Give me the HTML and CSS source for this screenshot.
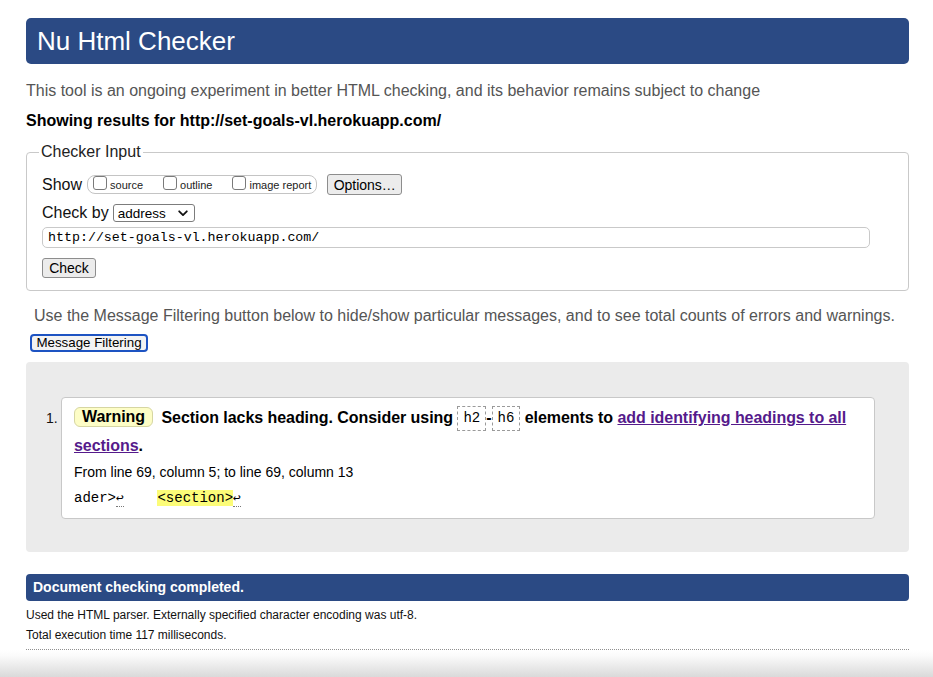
FILE: index.html
```html
<!DOCTYPE html>
<html lang="en">
<head>
<meta charset="utf-8">
<title>Nu Html Checker</title>
<link rel="stylesheet" href="styles.css">
</head>
<body>
<div class="page">
  <h1 class="title">Nu Html Checker</h1>
  <p class="intro">This tool is an ongoing experiment in better HTML checking, and its behavior remains subject to change</p>
  <p class="showing">Showing results for http://set-goals-vl.herokuapp.com/</p>
  <fieldset class="checker">
    <legend>Checker Input</legend>
    <div class="row show-row">
      <span class="lbl">Show</span>
      <span class="opts">
        <label class="opt"><input type="checkbox" class="cb">source</label>
        <label class="opt"><input type="checkbox" class="cb">outline</label>
        <label class="opt"><input type="checkbox" class="cb">image report</label>
      </span>
      <button class="btn options" type="button">Options…</button>
    </div>
    <div class="row by-row">
      <span class="lbl">Check by</span>
      <span class="select"><span class="sel-text">address</span><svg class="chev" width="10" height="7" viewBox="0 0 10 7"><path d="M1.2 1.3 5 5.1 8.8 1.3" fill="none" stroke="#111" stroke-width="1.8" stroke-linecap="round" stroke-linejoin="round"/></svg></span>
    </div>
    <input class="url" type="text" value="http://set-goals-vl.herokuapp.com/">
    <button class="btn check" type="button">Check</button>
  </fieldset>
  <p class="filter-note">Use the Message Filtering button below to hide/show particular messages, and to see total counts of errors and warnings.</p>
  <button class="btn filter" type="button">Message Filtering</button>
  <div class="results">
    <ol class="msgs">
      <li class="msg">
        <div class="num">1.</div>
        <div class="card">
          <p class="text"><span class="badge">Warning</span> Section lacks heading. Consider using <code class="el">h2</code>-<code class="el">h6</code> elements to <a class="link" href="#">add identifying headings to all sections</a>.</p>
          <p class="loc">From line 69, column 5; to line 69, column 13</p>
          <p class="extract">ader&gt;<span class="lf">↩</span>    <mark class="hl">&lt;section&gt;</mark><span class="lf">↩</span></p>
        </div>
      </li>
    </ol>
  </div>
  <div class="done">Document checking completed.</div>
  <p class="stat first">Used the HTML parser. Externally specified character encoding was utf-8.</p>
  <p class="stat">Total execution time 117 milliseconds.</p>
  <hr class="rule">
</div>
<div class="shade"></div>
</body>
</html>
```

FILE: styles.css
```css
* { box-sizing: border-box; }
html, body { margin: 0; padding: 0; background: #fff; overflow: hidden; }
body {
  font-family: "Liberation Sans", Arial, sans-serif;
  color: #000;
  width: 933px;
  height: 677px;
  display: flex;
  flex-direction: column;
}
.page { padding: 18px 24px 0 26px; }

.title {
  margin: 0;
  height: 46px;
  line-height: 46px;
  background: #2b4a84;
  color: #fff;
  font-size: 26px;
  font-weight: normal;
  padding-left: 11px;
  border-radius: 5px;
}
.intro { margin: 17px 0 0; font-size: 16px; line-height: 20px; color: #555; }
.showing { margin: 10px 0 0; font-size: 16px; line-height: 20px; font-weight: bold; }

.checker {
  margin: 11px 0 0;
  padding: 11px 15px 12px;
  border: 1px solid #c9c9c9;
  border-radius: 4px;
  min-width: 0;
}
.checker legend {
  padding: 0 2px;
  margin-left: -3px;
  font-size: 16px;
  line-height: 20px;
  color: #222;
}
.row { display: flex; align-items: center; }
.show-row { height: 23px; }
.by-row { height: 22px; margin-top: 6px; }
.lbl { font-size: 16px; color: #111; }
.opts {
  display: inline-flex;
  align-items: center;
  margin-left: 5px;
  height: 19px;
  border: 1px solid #c4c4c4;
  border-radius: 8px;
  padding: 0 5px;
}
.opt {
  display: inline-flex;
  align-items: flex-end;
  gap: 3px;
  font-size: 11px;
  color: #222;
  line-height: 13px;
}
.opt + .opt { margin-left: 20px; }
.cb {
  appearance: none;
  -webkit-appearance: none;
  margin: 0;
  width: 14px;
  height: 14px;
  border: 1px solid #7a7a7a;
  border-radius: 3px;
  background: #fff;
  position: relative;
  top: -2px;
}
.btn {
  display: block;
  font-family: "Liberation Sans", Arial, sans-serif;
  font-size: 13.33px;
  color: #000;
  background: #ececec;
  border: 1px solid #8d8d8d;
  border-radius: 3px;
  padding: 0;
}
.options { margin-left: 10px; width: 75px; height: 21px; font-size: 14px; }
.select {
  display: inline-flex;
  align-items: center;
  justify-content: space-between;
  margin-left: 4px;
  width: 82px;
  height: 18px;
  border: 1px solid #7c7c7c;
  border-radius: 3px;
  padding: 0 6px 0 4px;
  font-size: 13.5px;
  background: #fff;
}
.chev { display: block; }
.url {
  display: block;
  margin: 3px 0 0;
  width: 828px;
  height: 21px;
  border: 1px solid #c9c9c9;
  border-radius: 5px;
  padding: 0 5px;
  font-family: "Liberation Mono", "DejaVu Sans Mono", monospace;
  font-size: 13.3px;
  color: #000;
  background: #fff;
}
.check { margin-top: 10px; width: 54px; height: 20px; font-size: 14px; }

.filter-note { margin: 15px 0 0 8px; font-size: 16px; line-height: 20px; color: #555; }
.filter {
  margin: 8px 0 0 4px;
  width: 118px;
  height: 18px;
  line-height: 14px;
  border: 2px solid #1d53c2;
  border-radius: 4px;
  background: #f3f3f3;
}

.results {
  margin-top: 10px;
  background: #ebebeb;
  border-radius: 4px;
  padding: 35px 34px 33px 0;
}
.msgs { margin: 0; padding: 0; list-style: none; }
.msg { display: flex; }
.num {
  width: 35px;
  padding: 7px 0 0 20px;
  font-size: 14px;
  line-height: 28px;
  color: #111;
}
.card {
  flex: 1;
  background: #fff;
  border: 1px solid #c8c8c8;
  border-radius: 4px;
  padding: 6px 12px 7px;
}
.text { margin: 0; font-size: 16px; font-weight: bold; line-height: 28px; letter-spacing: -0.05px; }
.badge {
  display: inline-block;
  line-height: 18px;
  padding: 0 7px;
  background: #fdfdc6;
  border: 1px solid #d6d6a2;
  border-radius: 6px;
  margin-right: 4px;
  vertical-align: 1px;
}
.el {
  display: inline-block;
  font-family: "Liberation Mono", "DejaVu Sans Mono", monospace;
  font-size: 14px;
  font-weight: normal;
  line-height: 18px;
  padding: 2px 5px 3px;
  border: 1px dashed #9a9a9a;
  vertical-align: middle;
  letter-spacing: 0;
}
.link { color: #551a8b; text-decoration: underline; }
.loc { margin: 0; font-size: 14px; line-height: 24px; }
.extract {
  margin: 2px 0 0;
  font-family: "Liberation Mono", "DejaVu Sans Mono", monospace;
  font-size: 14px;
  line-height: 24px;
  white-space: pre;
}
.lf { font-size: 13px; border-bottom: 1px dotted #777; }
.hl { background: #fcfc78; color: #000; }

.done {
  margin-top: 22px;
  height: 27px;
  line-height: 27px;
  background: #2b4a84;
  color: #fff;
  font-size: 14px;
  font-weight: bold;
  padding-left: 7px;
  border-radius: 4px;
}
.stat { margin: 0; font-size: 12px; line-height: 20px; color: #111; }
.stat.first { margin-top: 4px; }
.rule { margin: 4px 0 0; border: 0; border-top: 1px dotted #8f8f8f; height: 0; }
.shade { flex: 1; background: linear-gradient(#ffffff, #fbfbfb 20%, #dadada); }
```
